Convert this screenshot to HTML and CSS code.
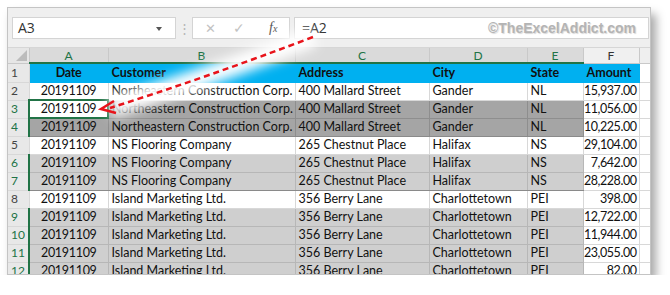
FILE: index.html
```html
<!DOCTYPE html>
<html lang="en">
  <head>
    <meta charset="UTF-8" />
    <title>Excel - Relative reference</title>
    <link rel="stylesheet" href="styles.css">
  </head>
  <body>
    <div class="window">
      <div class="formula-bar">
        <div class="name-box">A3 <span class="caret"></span></div>
        <div class="grip">&#8942;</div>
        <div class="fx-buttons">
          <span class="btn-x">&#x2715;</span>
          <span class="btn-ok">&#x2713;</span>
          <span class="btn-fx"><i>f</i><small>x</small></span>
        </div>
        <div class="formula">=A2 <span class="mark">&copy;TheExcelAddict.com</span></div>
      </div>

      <table class="sheet">
        <colgroup>
          <col class="c-rh" /><col class="c-a" /><col class="c-b" /><col class="c-c" />
          <col class="c-d" /><col class="c-e" /><col class="c-f" /><col class="c-pad" />
        </colgroup>
        <tr class="col-heads">
          <th class="corner"><span></span></th>
          <th class="on">A</th><th class="on">B</th><th class="on">C</th>
          <th class="on">D</th><th class="on">E</th><th>F</th><th class="pad"></th>
        </tr>
        <tr class="title">
          <th>1</th>
          <td class="mid">Date</td><td>Customer</td><td>Address</td><td>City</td><td>State</td><td>Amount</td><td class="pad"></td>
        </tr>
        <tr>
          <th>2</th>
          <td class="mid">20191109</td><td>Northeastern Construction Corp.</td><td>400 Mallard Street</td><td>Gander</td><td>NL</td><td class="num">15,937.00</td><td class="pad"></td>
        </tr>
        <tr class="dark top">
          <th class="sel">3</th>
          <td class="mid active">20191109</td><td class="sh">Northeastern Construction Corp.</td><td class="sh">400 Mallard Street</td><td class="sh">Gander</td><td class="sh last">NL</td><td class="num">11,056.00</td><td class="pad"></td>
        </tr>
        <tr class="dark bottom">
          <th class="sel">4</th>
          <td class="mid sh">20191109</td><td class="sh">Northeastern Construction Corp.</td><td class="sh">400 Mallard Street</td><td class="sh">Gander</td><td class="sh last">NL</td><td class="num">10,225.00</td><td class="pad"></td>
        </tr>
        <tr>
          <th>5</th>
          <td class="mid">20191109</td><td>NS Flooring Company</td><td>265 Chestnut Place</td><td>Halifax</td><td>NS</td><td class="num">29,104.00</td><td class="pad"></td>
        </tr>
        <tr class="light top">
          <th class="sel">6</th>
          <td class="mid sh">20191109</td><td class="sh">NS Flooring Company</td><td class="sh">265 Chestnut Place</td><td class="sh">Halifax</td><td class="sh last">NS</td><td class="num">7,642.00</td><td class="pad"></td>
        </tr>
        <tr class="light bottom">
          <th class="sel">7</th>
          <td class="mid sh">20191109</td><td class="sh">NS Flooring Company</td><td class="sh">265 Chestnut Place</td><td class="sh">Halifax</td><td class="sh last">NS</td><td class="num">28,228.00</td><td class="pad"></td>
        </tr>
        <tr>
          <th>8</th>
          <td class="mid">20191109</td><td>Island Marketing Ltd.</td><td>356 Berry Lane</td><td>Charlottetown</td><td>PEI</td><td class="num">398.00</td><td class="pad"></td>
        </tr>
        <tr class="light top">
          <th class="sel">9</th>
          <td class="mid sh">20191109</td><td class="sh">Island Marketing Ltd.</td><td class="sh">356 Berry Lane</td><td class="sh">Charlottetown</td><td class="sh last">PEI</td><td class="num">12,722.00</td><td class="pad"></td>
        </tr>
        <tr class="light">
          <th class="sel">10</th>
          <td class="mid sh">20191109</td><td class="sh">Island Marketing Ltd.</td><td class="sh">356 Berry Lane</td><td class="sh">Charlottetown</td><td class="sh last">PEI</td><td class="num">11,944.00</td><td class="pad"></td>
        </tr>
        <tr class="light">
          <th class="sel">11</th>
          <td class="mid sh">20191109</td><td class="sh">Island Marketing Ltd.</td><td class="sh">356 Berry Lane</td><td class="sh">Charlottetown</td><td class="sh last">PEI</td><td class="num">23,055.00</td><td class="pad"></td>
        </tr>
        <tr class="light">
          <th class="sel">12</th>
          <td class="mid sh">20191109</td><td class="sh">Island Marketing Ltd.</td><td class="sh">356 Berry Lane</td><td class="sh">Charlottetown</td><td class="sh last">PEI</td><td class="num">82.00</td><td class="pad"></td>
        </tr>
      </table>

      <svg class="arrow" width="670" height="295" viewBox="0 0 670 295">
        <defs>
          <filter id="glow" x="-20%" y="-50%" width="140%" height="200%">
            <feGaussianBlur stdDeviation="6" />
          </filter>
        </defs>
        <path d="M313 37 Q205 78 110 108" fill="none" stroke="#fff" stroke-width="20" filter="url(#glow)" />
        <path d="M313 37 Q205 78 110 108" fill="none" stroke="#e8141b" stroke-width="2.5" stroke-dasharray="6 4" />
        <path d="M114 101 L101 109 L116 113" fill="none" stroke="#e8141b" stroke-width="2.5" stroke-linejoin="miter" />
      </svg>
    </div>
  </body>
</html>
```

FILE: styles.css
```css
* {
  box-sizing: border-box;
}

body {
  margin: 0;
  background-color: #fff;
  font-family: Lato, "Open Sans", sans-serif;
}

.window {
  position: relative;
  margin: 7px 0 0 7px;
  width: 644px;
  height: 268px;
  background-color: #efefef;
  border: 1px solid #c4c4c4;
  box-shadow: 5px 7px 9px rgba(0, 0, 0, 0.35);
  overflow: hidden;
}

/* formula bar */
.formula-bar {
  display: flex;
  align-items: center;
  height: 40px;
  padding: 0 1px 0 4px;
  border-bottom: 1px solid #d6d6d6;
}

.name-box {
  position: relative;
  display: flex;
  align-items: center;
  width: 164px;
  height: 22px;
  padding-left: 5px;
  background-color: #fff;
  border: 1px solid #d4d4d4;
  font-family: "Open Sans", sans-serif;
  font-size: 14px;
  color: #333;
}

.caret {
  position: absolute;
  right: 13px;
  top: 9px;
  border-left: 3px solid transparent;
  border-right: 3px solid transparent;
  border-top: 4px solid #555;
}

.grip {
  width: 17px;
  text-align: center;
  color: #b5b5b5;
  font-size: 13px;
}

.fx-buttons {
  display: flex;
  align-items: center;
  width: 98px;
  height: 22px;
  margin-left: -1px;
  background-color: #fff;
  border: 1px solid #d4d4d4;
  color: #c2c2c2;
  font-size: 14px;
}

.btn-x {
  margin-left: 12px;
  font-size: 13px;
}

.btn-ok {
  margin-left: 17px;
  font-size: 14px;
}

.btn-fx {
  margin-left: 24px;
  color: #555;
  font-family: "Liberation Serif", serif;
  font-size: 14px;
}

.btn-fx small {
  font-size: 10px;
  font-style: italic;
}

.formula {
  display: flex;
  align-items: center;
  justify-content: space-between;
  flex: 1;
  height: 22px;
  margin-left: 4px;
  padding: 0 12px 0 7px;
  background-color: #fff;
  border: 1px solid #d4d4d4;
  font-family: "Open Sans", sans-serif;
  font-size: 14px;
  color: #333;
}

.mark {
  font-family: "Liberation Sans", sans-serif;
  font-weight: bold;
  font-size: 14px;
  color: #b4b4b4;
  text-shadow: 1px 1px 1px #d8d8d8;
}

/* grid */
.sheet {
  width: 642px;
  border-collapse: collapse;
  table-layout: fixed;
  font-size: 12.5px;
  color: #111;
}

.c-rh { width: 21px; }
.c-a { width: 79px; }
.c-b { width: 187px; }
.c-c { width: 134px; }
.c-d { width: 98px; }
.c-e { width: 56px; }
.c-f { width: 56px; }
.c-pad { width: 11px; }

.sheet th,
.sheet td {
  height: 18px;
  padding: 0 3px;
  white-space: nowrap;
  overflow: hidden;
  border-right: 1px solid #d8d8d8;
  border-bottom: 1px solid #d8d8d8;
  text-align: left;
  font-weight: normal;
  line-height: 16px;
}

.sheet td {
  background-color: #fff;
}

.col-heads th {
  height: 15px;
  padding: 0;
  text-align: center;
  font-size: 12px;
  line-height: 13px;
  color: #333;
  background-color: #f0f0f0;
  border-right: 1px solid #c9c9c9;
  border-bottom: 1px solid #c9c9c9;
}

.col-heads th.on {
  color: #217346;
  background-color: #dadada;
  border-bottom: 2px solid #217346;
}

.col-heads .corner {
  position: relative;
  background-color: #e6e6e6;
}

.corner span {
  position: absolute;
  right: 2px;
  bottom: 2px;
  border-left: 11px solid transparent;
  border-bottom: 11px solid #bcbcbc;
}

.col-heads .pad {
  background-color: #efefef;
  border-right: none;
}

.sheet td.pad {
  background-color: #fff;
  border-right: none;
}

tr > th {
  padding: 0;
  text-align: center;
  font-size: 12px;
  color: #444;
  background-color: #e8e8e8;
  border-right: 1px solid #c9c9c9;
}

tr > th.sel {
  color: #217346;
  border-right: 2px solid #217346;
}

.title td {
  height: 19px;
  font-weight: bold;
  background-color: #00b0f0;
  border-color: #00b0f0;
}

.title td.pad {
  background-color: #fff;
  border-color: #d8d8d8;
}

td.mid {
  text-align: center;
  letter-spacing: -0.3px;
}

td.num {
  padding: 0 2px 0 0;
  text-align: right;
  letter-spacing: -0.45px;
}

.dark td.sh {
  background-color: #a5a5a5;
  border-color: #8e8e8e;
}

.light td.sh {
  background-color: #cfcfcf;
  border-color: #b7b7b7;
}

.dark.top td.sh,
.light.top td.sh {
  border-top: 1px solid #8a8a8a;
}

.dark.bottom td.sh,
.light.bottom td.sh {
  border-bottom: 1px solid #8a8a8a;
}

td.last {
  border-right: 1px solid #8a8a8a;
}

td.active {
  background-color: #fff;
  border: 2px solid #217346;
}

.arrow {
  position: absolute;
  left: -8px;
  top: -8px;
  pointer-events: none;
}
```
